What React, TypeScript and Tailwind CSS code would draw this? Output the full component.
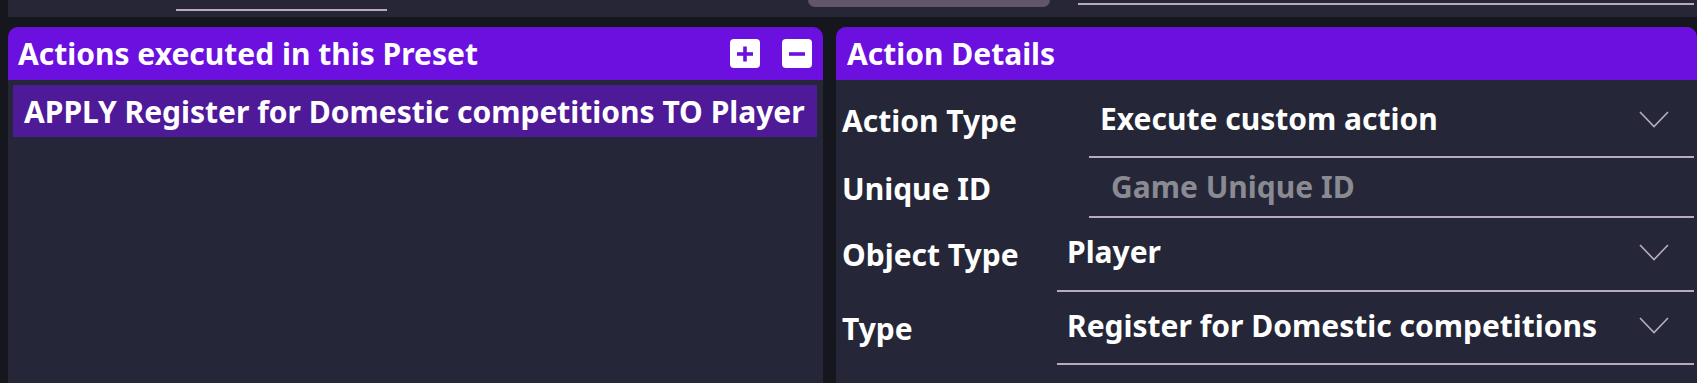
import React from 'react';

const font = { fontFamily: '"Noto Sans", "Open Sans", sans-serif' };

const Chevron = () => (
    <svg width="30" height="17" viewBox="0 0 30 17" className="shrink-0">
        <polyline points="1,1 15,15.5 29,1" fill="none" stroke="#b9adc4" strokeWidth="1.6" />
    </svg>
);

const HeaderButton = ({ kind }: { kind: 'plus' | 'minus' }) => (
    <button className="w-[30px] h-[29px] bg-white rounded-[4px] flex items-center justify-center">
        <svg width="18" height="18" viewBox="0 0 18 18">
            <line x1="1" y1="9" x2="17" y2="9" stroke="#6b10de" strokeWidth="3.6" />
            {kind === 'plus' && <line x1="9" y1="1.5" x2="9" y2="16.5" stroke="#6b10de" strokeWidth="3.6" />}
        </svg>
    </button>
);

const FieldRow = ({ label, value, placeholder, height, labelPad, fieldStart, textPad, select }: {
    label: string, value?: string, placeholder?: string, height: string, labelPad: string, fieldStart: string, textPad: string, select?: boolean
}) => (
    <div className={`flex items-center ${height}`}>
        <div className={`${fieldStart} ${labelPad} shrink-0 pl-[6px] text-white font-bold text-[30px] leading-[40px]`}>{label}</div>
        <div className={`flex-1 h-full flex items-center border-b-2 border-[#b9a9c3] ${textPad} pr-[25px]`}>
            {value ? (
                <span className="flex-1 text-white font-bold text-[30px] leading-[40px]">{value}</span>
            ) : (
                <span className="flex-1 text-[#8a8a93] font-bold text-[30px] leading-[40px]">{placeholder}</span>
            )}
            {select && <Chevron />}
        </div>
    </div>
);

const App = () => {
    return (
        <div className="w-[1697px] h-[383px] bg-[#16161e] overflow-hidden" style={font}>
            {/* top strip */}
            <div className="ml-[8px] h-[17px] bg-[#262637] flex items-start">
                <div className="ml-[168px] mt-[9px] w-[211px] h-[2px] bg-[#b9a9c3]" />
                <div className="ml-[421px] w-[242px] h-[7px] rounded-b-[10px] bg-[#5f5668]" />
                <div className="ml-[28px] mt-[3px] w-[616px] h-[2px] bg-[#b9a9c3]" />
            </div>

            <div className="mt-[10px] ml-[8px] flex gap-[13px] h-[356px]">
                {/* Actions list */}
                <div className="w-[815px] shrink-0 flex flex-col bg-[#252637] rounded-t-[10px]">
                    <div className="h-[53px] bg-[#6b10de] rounded-t-[10px] flex items-center pl-[10px] pr-[11px]">
                        <h3 className="flex-1 text-white font-bold text-[30px] leading-[40px]">Actions executed in this Preset</h3>
                        <div className="flex gap-[22px]">
                            <HeaderButton kind="plus" />
                            <HeaderButton kind="minus" />
                        </div>
                    </div>
                    <div className="mt-[5px] ml-[5px] mr-[6px] h-[52px] bg-[#4f1a97] flex items-center pl-[11px] pt-[1px]">
                        <span className="text-white font-bold text-[30px] leading-[40px]">APPLY Register for Domestic competitions TO Player</span>
                    </div>
                </div>

                {/* Action details */}
                <div className="flex-1 flex flex-col bg-[#252637] rounded-t-[10px]">
                    <div className="h-[53px] bg-[#6b10de] rounded-t-[10px] flex items-center pl-[11px]">
                        <h3 className="text-white font-bold text-[30px] leading-[40px]">Action Details</h3>
                    </div>
                    <div className="pr-[3px]">
                        <FieldRow label="Action Type" value="Execute custom action" height="h-[78px]" labelPad="pt-[4px]" fieldStart="w-[253px]" textPad="pl-[11px] pt-[2px]" select />
                        <FieldRow label="Unique ID" placeholder="Game Unique ID" height="h-[60px]" labelPad="pt-[2px]" fieldStart="w-[253px]" textPad="pl-[22px]" />
                        <FieldRow label="Object Type" value="Player" height="h-[74px]" labelPad="pb-[0px]" fieldStart="w-[221px]" textPad="pl-[10px] pb-[4px]" select />
                        <FieldRow label="Type" value="Register for Domestic competitions" height="h-[73px]" labelPad="pb-[0px]" fieldStart="w-[221px]" textPad="pl-[10px] pb-[4px]" select />
                    </div>
                </div>
            </div>
        </div>
    );
};

export default App;
